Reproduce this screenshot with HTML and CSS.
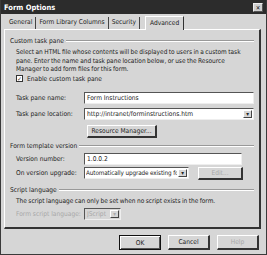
FILE: index.html
```html
<!DOCTYPE html>
<html lang="en">
<head>
    <meta charset="UTF-8">
    <title>Form Options</title>
    <link rel="stylesheet" href="styles.css">
</head>
<body>
    <div class="dialog">
        <div class="titlebar">
            <span class="title">Form Options</span>
            <span class="close">&#x2715;</span>
        </div>

        <div class="tabs">
            <span class="tab">General</span>
            <span class="tab">Form Library Columns</span>
            <span class="tab">Security</span>
            <span class="tab active">Advanced</span>
        </div>

        <div class="panel">
            <div class="group-title"><span>Custom task pane</span></div>
            <div class="group task">
                <p class="note">Select an HTML file whose contents will be displayed to users in a custom task<br>pane. Enter the name and task pane location below, or use the Resource<br>Manager to add form files for this form.</p>
                <label class="check"><span class="box">&#x2713;</span>Enable custom task pane</label>
                <div class="row">
                    <span class="label">Task pane name:</span>
                    <div class="field wide"><span class="value">Form Instructions</span></div>
                </div>
                <div class="row">
                    <span class="label">Task pane location:</span>
                    <div class="field wide combo"><span class="value">http://intranet/forminstructions.htm</span><span class="arrow">&#x25BE;</span></div>
                </div>
                <div class="row">
                    <span class="label"></span>
                    <span class="btn res">Resource Manager...</span>
                </div>
            </div>

            <div class="group-title"><span>Form template version</span></div>
            <div class="group version">
                <div class="row">
                    <span class="label">Version number:</span>
                    <div class="field ver"><span class="value">1.0.0.2</span></div>
                </div>
                <div class="row">
                    <span class="label">On version upgrade:</span>
                    <div class="field combo upg"><span class="value">Automatically upgrade existing fo</span><span class="arrow">&#x25BE;</span></div>
                    <span class="btn disabled edit">Edit...</span>
                </div>
            </div>

            <div class="group-title"><span>Script language</span></div>
            <div class="group script">
                <p class="note">The script language can only be set when no script exists in the form.</p>
                <div class="row">
                    <span class="label disabled">Form script language:</span>
                    <div class="field combo lang disabled"><span class="value">JScript</span><span class="arrow">&#x25BE;</span></div>
                </div>
            </div>
        </div>

        <div class="footer">
            <span class="btn default">OK</span>
            <span class="btn">Cancel</span>
            <span class="btn disabled">Help</span>
        </div>
    </div>
</body>
</html>
```

FILE: styles.css
```css
* {
    box-sizing: border-box;
    margin: 0;
    padding: 0;
}

body {
    font-family: 'DejaVu Sans Condensed', 'DejaVu Sans', sans-serif;
    font-size: 6.6px;
    background: #d6d6d6;
    color: #222;
}

.dialog {
    width: 267px;
    height: 255px;
    background: #d6d6d6;
    border: 1px solid #3a3a3a;
    border-top: none;
    display: flex;
    flex-direction: column;
}

.titlebar {
    height: 14px;
    flex: none;
    background: #2c2c2c;
    color: #fff;
    display: flex;
    align-items: center;
    justify-content: space-between;
    padding: 0 3px;
}

.title {
    font-weight: bold;
    font-size: 7.5px;
}

.close {
    width: 10px;
    height: 9px;
    background: #d0d0d0;
    color: #111;
    font-size: 6px;
    display: flex;
    align-items: center;
    justify-content: center;
    border: 1px solid #eee;
    border-right-color: #555;
    border-bottom-color: #555;
}

.tabs {
    display: flex;
    flex: none;
    padding: 3px 0 0 5px;
    height: 15px;
    align-items: flex-end;
}

.tab {
    padding: 2px 3px 3px;
    border-right: 1px solid #444;
    height: 12px;
    line-height: 7px;
    white-space: nowrap;
}

.tab.active {
    height: 14px;
    margin-left: 5px;
    padding: 3px 4px;
    border-left: 1px solid #fff;
    border-top: 1px solid #fff;
    border-right: 1px solid #333;
    background: #d6d6d6;
    position: relative;
    top: 1px;
}

.panel {
    flex: none;
    margin: 0 5px 0 3px;
    height: 200px;
    border: 1px solid #fff;
    border-right: 2px solid #333;
    border-bottom: 2px solid #333;
    padding: 6px 5px 0 5px;
}

.group-title {
    display: flex;
    align-items: center;
    gap: 2px;
    height: 9px;
}

.group-title::after {
    content: '';
    flex: 1;
    border-top: 1px solid #999;
    border-bottom: 1px solid #fff;
}

.group {
    padding-left: 6px;
}

.task {
    padding-top: 3px;
    padding-bottom: 4px;
}

.version {
    padding-top: 2px;
    padding-bottom: 6px;
}

.script {
    padding-top: 2px;
}

.note {
    font-size: 6.5px;
    line-height: 8.5px;
    word-spacing: -0.4px;
    white-space: nowrap;
}

.check {
    display: flex;
    align-items: center;
    gap: 4px;
    height: 8px;
    margin: 1px 0 9px;
}

.box {
    width: 7px;
    height: 7px;
    border: 1px solid #333;
    background: #fff;
    font-size: 6px;
    line-height: 5px;
    text-align: center;
}

.row {
    display: flex;
    align-items: center;
    height: 12px;
    margin-bottom: 4px;
}

.version .row {
    margin-bottom: 2px;
}

.version .row:last-child {
    height: 13px;
    margin-bottom: 0;
}

.task .row:last-child {
    height: 13px;
    margin: 5px 0 0;
}

.script .row {
    margin: 3px 0 0;
}

.label {
    width: 68px;
    flex: none;
    white-space: nowrap;
}

.field {
    height: 12px;
    background: #fff;
    border: 1px solid #555;
    border-right-color: #eee;
    border-bottom-color: #eee;
    padding: 0 2px;
    line-height: 10px;
    position: relative;
    display: flex;
}

.value {
    flex: 1;
    white-space: nowrap;
    overflow: hidden;
}

.wide {
    width: 170px;
}

.ver {
    width: 158px;
}

.upg {
    width: 105px;
    padding-left: 1px;
}

.upg .value {
    font-size: 6.3px;
    letter-spacing: -0.1px;
}

.lang {
    width: 37px;
}

.combo {
    padding-right: 11px;
}

.arrow {
    position: absolute;
    right: 1px;
    top: 1px;
    width: 9px;
    height: 8px;
    background: #d6d6d6;
    border: 1px solid #fff;
    border-right-color: #444;
    border-bottom-color: #444;
    font-size: 6px;
    line-height: 6px;
    text-align: center;
}

.btn {
    display: inline-flex;
    align-items: center;
    justify-content: center;
    height: 13px;
    background: #d6d6d6;
    border: 1px solid #fff;
    border-right: 2px solid #333;
    border-bottom: 2px solid #333;
}

.res {
    width: 70px;
    margin-left: 3px;
}

.edit {
    width: 45px;
    margin-left: 9px;
}

.disabled {
    color: #a8a8a8;
}

.field.disabled {
    background: #d6d6d6;
}

.footer {
    display: flex;
    justify-content: flex-end;
    gap: 7px;
    padding: 6px 7px 0 0;
}

.footer .btn {
    width: 42px;
    height: 15px;
}

.footer .btn.default {
    border: 1px solid #111;
    box-shadow: inset 1px 1px #fff, inset -1px -1px #555;
}
```
